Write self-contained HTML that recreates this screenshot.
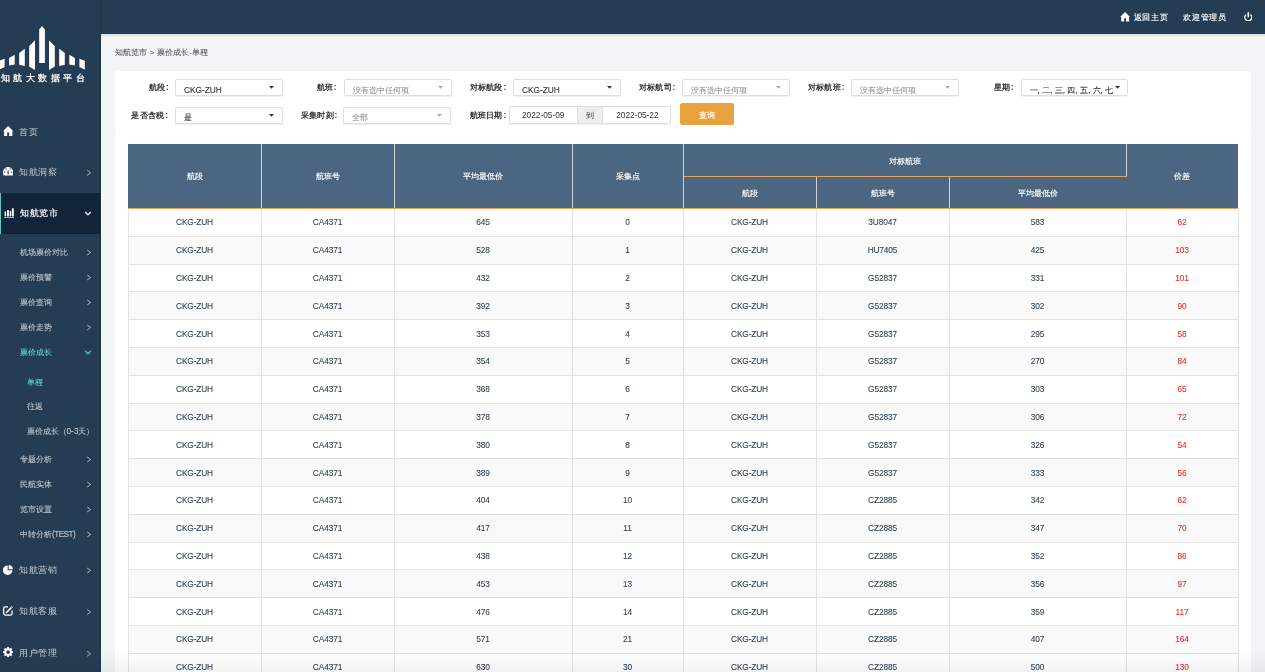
<!DOCTYPE html>
<html><head><meta charset="utf-8">
<style>
*{box-sizing:border-box;margin:0;padding:0}
html,body{width:1265px;height:672px;overflow:hidden}
body{position:relative;background:#f3f4f6;font-family:"Liberation Sans",sans-serif;color:#333}
.abs{position:absolute}
#side{position:absolute;left:0;top:0;width:101px;height:672px;background:#253d54;border-right:1px solid #1e3448}
#top{position:absolute;left:101px;top:0;width:1164px;height:34px;background:#253d54}
#topshadow{position:absolute;left:101px;top:34px;width:1164px;height:3px;background:linear-gradient(rgba(0,0,0,0.10),rgba(0,0,0,0))}
.mi{position:absolute;left:0;width:100px;color:#c3cad2;font-size:9px;letter-spacing:0.6px;line-height:12px;white-space:nowrap}
.mi .t{position:absolute;left:19px;top:0}
.mi .ic{position:absolute;left:3px;top:0}
.arr{position:absolute;left:86px;width:6px;height:6px}
.sub{position:absolute;color:#bcc4cc;font-size:8.3px;line-height:10px;white-space:nowrap;-webkit-text-stroke:0.1px currentColor}
.teal{color:#5fd3d0}
#logo-text{position:absolute;left:1px;top:72.2px;color:#fff;font-size:9.4px;letter-spacing:3.45px;-webkit-text-stroke:0.25px #fff;white-space:nowrap;line-height:12px}
.tr{position:absolute;top:11px;color:#fff;font-size:8.4px;letter-spacing:0.75px;line-height:11px;white-space:nowrap;-webkit-text-stroke:0.15px #fff}
#crumb{position:absolute;left:115px;top:46px;font-size:8px;color:#5c5c5c;line-height:11px;white-space:nowrap;letter-spacing:0.1px;-webkit-text-stroke:0.1px #5c5c5c}
.panel{position:absolute;background:#fff;border-radius:3px}
.lbl{position:absolute;font-size:8.3px;letter-spacing:0.3px;font-weight:bold;color:#333;line-height:10px;white-space:nowrap;text-align:right}
.sel{position:absolute;height:17px;width:108px;border:1px solid #dedede;box-shadow:0 0.5px 1px rgba(0,0,0,0.06);border-radius:2px;background:#fff;font-size:8.3px;color:#333;white-space:nowrap}
.sel .v{position:absolute;left:8px;top:4.6px;line-height:10px;-webkit-text-stroke:0.1px currentColor}
.sel.ph .v{color:#999}
.car{position:absolute;top:6.2px;width:5px;height:3px}

#wrap{position:absolute;left:0;top:0;width:1265px;height:672px;will-change:transform}
#tbl{position:absolute;left:128px;top:144px;border-collapse:collapse;table-layout:fixed;width:1110px;font-size:8.3px}
#tbl th{background:#4a6782;color:#fff;font-weight:normal;border:1px solid #e0e0e0;border-top:none;height:32px;text-align:center}
#tbl td{height:27.8px;text-align:center;color:#34495e;border:1px solid #e6e6e6;padding:0}
#tbl tr.s td{background:#f9f9f9}
#tbl td.r{color:#e5332a}
.hl{left:128px;width:1110px;height:1px;background:#e3e3e3}
.vl{top:209px;height:470px;width:1px;background:#e3e3e3}
.hv{width:1px;background:rgba(255,255,255,0.7)}
.cell{position:absolute;text-align:center;font-size:8.3px;letter-spacing:-0.12px;line-height:10px;color:#2c3f52;white-space:nowrap;-webkit-text-stroke:0.08px #2c3f52}
.cell.r{color:#e62a21;-webkit-text-stroke:0.08px #e62a21}
.hc{position:absolute;text-align:center;font-size:8.3px;line-height:10px;color:#fff;white-space:nowrap;-webkit-text-stroke:0.15px #fff}
.dt{position:absolute;top:110px;text-align:center;font-size:8.3px;line-height:10px;color:#333;white-space:nowrap}
#shade{position:absolute;left:0;top:652px;width:1265px;height:20px;background:linear-gradient(rgba(0,0,0,0),rgba(0,0,0,0.05))}
</style></head><body>
<div id="wrap">
<div id="side">
<svg class="abs" style="left:0;top:0" width="100" height="90" viewBox="0 0 100 90">
<g fill="#fff">
<polygon points="39.2,62.9 39.2,29.4 42,26.1 44.9,29.4 44.9,62.9"/>
<polygon points="29.2,46.2 35,40.2 35,70 29.2,66.6"/>
<polygon points="19.2,52.9 24.8,48.8 24.8,65.9 19.2,64.8"/>
<polygon points="9.1,58.1 14.7,54.7 14.7,64.4 9.1,65.5"/>
<polygon points="-0.8,60.7 4.6,58.8 4.6,67 -0.8,69.6"/>
<polygon points="49,40.2 54.8,46.2 54.8,66.6 49,70"/>
<polygon points="59.2,48.8 64.8,52.9 64.8,64.8 59.2,65.9"/>
<polygon points="69.3,54.7 74.9,58.1 74.9,65.5 69.3,64.4"/>
<polygon points="79.4,58.8 84.8,60.7 84.8,69.6 79.4,67"/>
</g></svg>
<div id="logo-text">知航大数据平台</div>

<!-- main menu -->
<div class="mi" style="top:126px;height:12px">
 <svg class="ic" width="10.4" height="10.1" viewBox="0 0 10.4 10.1" style="left:2.7px;top:-0.2px"><polygon fill="#fff" points="0,5.3 5.2,0 10.4,5.3 9.4,5.3 9.4,10.1 6.2,10.1 6.2,6.5 4.2,6.5 4.2,10.1 1.1,10.1 1.1,5.3"/></svg>
 <span class="t">首页</span>
</div>
<div class="mi" style="top:166px;height:12px">
 <svg class="ic" width="10.3" height="8.6" viewBox="0 0 10.3 8.6" style="left:2.8px;top:1.4px"><path fill="#fff" fill-rule="evenodd" d="M0.7,8.6 C0.25,7.8 0,6.7 0,5.4 C0,2.4 2.3,0 5.15,0 C8,0 10.3,2.4 10.3,5.4 C10.3,6.7 10.05,7.8 9.6,8.6 Z M2.35,2.0 a0.65,0.65 0 1,0 1.3,0 a0.65,0.65 0 1,0 -1.3,0 Z M6.65,2.0 a0.65,0.65 0 1,0 1.3,0 a0.65,0.65 0 1,0 -1.3,0 Z M1.05,5.2 a0.65,0.65 0 1,0 1.3,0 a0.65,0.65 0 1,0 -1.3,0 Z M7.95,5.2 a0.65,0.65 0 1,0 1.3,0 a0.65,0.65 0 1,0 -1.3,0 Z M4.65,3.6 L5.65,3.6 L5.9,7.2 L4.4,7.2 Z"/></svg>
 <span class="t">知航洞察</span>
</div>
<div class="abs" style="left:0;top:192.5px;width:100px;height:41.3px;background:#11243a;border-left:1px solid #5bc8c6"></div>
<div class="mi" style="top:207px;height:12px;color:#fff">
 <svg class="ic" width="10" height="10.5" viewBox="0 0 10 10.2" style="left:4px;top:0.8px"><g fill="#fff"><rect x="0.6" y="3.1" width="1.5" height="5.3" rx="0.7"/><rect x="3" y="1.9" width="1.9" height="6.5" rx="0.5"/><rect x="5.7" y="2.6" width="1.5" height="5.8" rx="0.7"/><rect x="7.9" y="0" width="1.9" height="8.4" rx="0.5"/><rect x="0" y="9.2" width="10" height="1" /></g></svg>
 <span class="t" style="left:20px;-webkit-text-stroke:0.15px #fff">知航览市</span>
</div>
<!-- arrows -->
<svg class="abs" style="left:0;top:0" width="100" height="672" viewBox="0 0 100 672">
<g fill="none" stroke="#b3bcc5" stroke-width="0.95" stroke-linecap="round" stroke-linejoin="round">
<polyline points="87.5,170.45 90.6,172.80 87.5,175.15"/>
<polyline points="87.5,250.25 90.6,252.50 87.5,254.75"/>
<polyline points="87.5,275.25 90.6,277.50 87.5,279.75"/>
<polyline points="87.5,300.25 90.6,302.50 87.5,304.75"/>
<polyline points="87.5,325.25 90.6,327.50 87.5,329.75"/>
<polyline points="87.5,457.25 90.6,459.50 87.5,461.75"/>
<polyline points="87.5,482.25 90.6,484.50 87.5,486.75"/>
<polyline points="87.5,507.25 90.6,509.50 87.5,511.75"/>
<polyline points="87.5,532.25 90.6,534.50 87.5,536.75"/>
<polyline points="87.5,568.25 90.6,570.50 87.5,572.75"/>
<polyline points="87.5,609.85 90.6,612.10 87.5,614.35"/>
<polyline points="87.5,651.45 90.6,653.70 87.5,655.95"/>
</g>
<polyline fill="none" stroke="#eef1f4" stroke-width="1.25" stroke-linecap="round" stroke-linejoin="round" points="85.5,212.3 88,214.9 90.5,212.3"/>
<polyline fill="none" stroke="#5fd3d0" stroke-width="1.2" stroke-linecap="round" stroke-linejoin="round" points="85.5,351.2 88,353.8 90.5,351.2"/>
</svg>

<div class="sub" style="left:20px;top:247px">机场票价对比</div>
<div class="sub" style="left:20px;top:272.2px">票价预警</div>
<div class="sub" style="left:20px;top:297.1px">票价查询</div>
<div class="sub" style="left:20px;top:322px">票价走势</div>
<div class="sub teal" style="left:20px;top:347.1px">票价成长</div>
<div class="sub teal" style="left:26.5px;top:376.5px">单程</div>
<div class="sub" style="left:26.5px;top:401.3px">往返</div>
<div class="sub" style="left:26.5px;top:425.9px">票价成长（0-3天）</div>
<div class="sub" style="left:20px;top:454.2px">专题分析</div>
<div class="sub" style="left:20px;top:478.7px">民航实体</div>
<div class="sub" style="left:20px;top:504px">览市设置</div>
<div class="sub" style="left:20px;top:529px">中转分析<span style="letter-spacing:-0.6px">(TEST)</span></div>

<div class="mi" style="top:564px;height:12px">
 <svg class="ic" width="10" height="10" viewBox="0 0 10 10" style="left:2.8px;top:0.6px"><g fill="#fff"><path d="M4.7,0.45 A4.75,4.75 0 1,0 9.45,5.2 L4.7,5.2 Z"/><path d="M5.6,0 L5.6,4.3 L9.9,4.3 A4.3,4.3 0 0,0 5.6,0 Z"/></g></svg>
 <span class="t">知航营销</span>
</div>
<div class="mi" style="top:605px;height:12px">
 <svg class="ic" width="10" height="10" viewBox="0 0 10 10" style="left:3px;top:1px"><path fill="none" stroke="#fff" stroke-width="1.25" d="M5,0.9 L2.2,0.9 Q0.7,0.9 0.7,2.4 L0.7,7.6 Q0.7,9.1 2.2,9.1 L7.6,9.1 Q9.1,9.1 9.1,7.6 L9.1,4.6"/><path fill="#fff" d="M8.4,0.3 Q8.8,0 9.2,0.4 L9.5,0.7 Q9.9,1.1 9.6,1.5 L9.2,1.9 L8.0,0.7 Z M7.6,1.1 L8.8,2.3 L4.0,7.0 L2.6,7.4 L3.0,6.0 Z"/></svg>
 <span class="t">知航客服</span>
</div>
<div class="mi" style="top:647px;height:12px">
 <svg class="ic" width="10.2" height="10.2" viewBox="-5.1 -5.1 10.2 10.2" style="left:2.8px;top:0.1px"><g fill="#fff"><rect x="-0.95" y="-5.05" width="1.9" height="2.4" transform="rotate(0)"/><rect x="-0.95" y="-5.05" width="1.9" height="2.4" transform="rotate(45)"/><rect x="-0.95" y="-5.05" width="1.9" height="2.4" transform="rotate(90)"/><rect x="-0.95" y="-5.05" width="1.9" height="2.4" transform="rotate(135)"/><rect x="-0.95" y="-5.05" width="1.9" height="2.4" transform="rotate(180)"/><rect x="-0.95" y="-5.05" width="1.9" height="2.4" transform="rotate(225)"/><rect x="-0.95" y="-5.05" width="1.9" height="2.4" transform="rotate(270)"/><rect x="-0.95" y="-5.05" width="1.9" height="2.4" transform="rotate(315)"/><circle r="3.75"/></g><circle r="1.85" fill="#253d54"/></svg>
 <span class="t">用户管理</span>
</div>
</div>

<div id="top">
</div>
<div id="topshadow"></div>
<svg class="abs" style="left:1119.6px;top:12.2px" width="10.2" height="9.6" viewBox="0 0 10.4 10.1"><polygon fill="#fff" points="0,5.3 5.2,0 10.4,5.3 9.4,5.3 9.4,10.1 6.2,10.1 6.2,6.5 4.2,6.5 4.2,10.1 1.1,10.1 1.1,5.3"/></svg>
<div class="tr" style="left:1133.5px;top:12px">返回主页</div>
<div class="tr" style="left:1183px;top:12px">欢迎管理员</div>
<svg class="abs" style="left:1243.8px;top:11.8px" width="8.6" height="9.4" viewBox="0 0 8.6 9.4"><g fill="none" stroke="#fff" stroke-linecap="round"><path stroke-width="1.3" d="M1.86,2.86 A3.45,3.45 0 1,0 6.74,2.86"/><line stroke-width="1.6" x1="4.3" y1="0.8" x2="4.3" y2="4.5"/></g></svg>

<div id="crumb" style="top:46.8px">知航览市 &gt; 票价成长-单程</div>
<div class="panel" style="left:115px;top:71px;width:1136px;height:59.5px"></div>
<div class="panel" style="left:115px;top:130.5px;width:1136px;height:560px"></div>
<div class="abs" style="left:128px;top:625px;width:1110px;height:28px;background:#f9f9f9"></div>
<div class="abs" style="left:128px;top:569px;width:1110px;height:28px;background:#f9f9f9"></div>
<div class="abs" style="left:128px;top:514px;width:1110px;height:28px;background:#f9f9f9"></div>
<div class="abs" style="left:128px;top:458px;width:1110px;height:28px;background:#f9f9f9"></div>
<div class="abs" style="left:128px;top:403px;width:1110px;height:27px;background:#f9f9f9"></div>
<div class="abs" style="left:128px;top:347px;width:1110px;height:28px;background:#f9f9f9"></div>
<div class="abs" style="left:128px;top:291px;width:1110px;height:28px;background:#f9f9f9"></div>
<div class="abs" style="left:128px;top:236px;width:1110px;height:28px;background:#f9f9f9"></div>
<div class="cell" style="left:128px;width:133px;top:217.30px">CKG-ZUH</div>
<div class="cell" style="left:261px;width:133px;top:217.30px">CA4371</div>
<div class="cell" style="left:394px;width:178px;top:217.30px">645</div>
<div class="cell" style="left:572px;width:111px;top:217.30px">0</div>
<div class="cell" style="left:683px;width:133px;top:217.30px">CKG-ZUH</div>
<div class="cell" style="left:816px;width:133px;top:217.30px">3U8047</div>
<div class="cell" style="left:949px;width:177px;top:217.30px">583</div>
<div class="cell r" style="left:1126px;width:112px;top:217.30px">62</div>
<div class="cell" style="left:128px;width:133px;top:245.10px">CKG-ZUH</div>
<div class="cell" style="left:261px;width:133px;top:245.10px">CA4371</div>
<div class="cell" style="left:394px;width:178px;top:245.10px">528</div>
<div class="cell" style="left:572px;width:111px;top:245.10px">1</div>
<div class="cell" style="left:683px;width:133px;top:245.10px">CKG-ZUH</div>
<div class="cell" style="left:816px;width:133px;top:245.10px">HU7405</div>
<div class="cell" style="left:949px;width:177px;top:245.10px">425</div>
<div class="cell r" style="left:1126px;width:112px;top:245.10px">103</div>
<div class="cell" style="left:128px;width:133px;top:272.90px">CKG-ZUH</div>
<div class="cell" style="left:261px;width:133px;top:272.90px">CA4371</div>
<div class="cell" style="left:394px;width:178px;top:272.90px">432</div>
<div class="cell" style="left:572px;width:111px;top:272.90px">2</div>
<div class="cell" style="left:683px;width:133px;top:272.90px">CKG-ZUH</div>
<div class="cell" style="left:816px;width:133px;top:272.90px">G52837</div>
<div class="cell" style="left:949px;width:177px;top:272.90px">331</div>
<div class="cell r" style="left:1126px;width:112px;top:272.90px">101</div>
<div class="cell" style="left:128px;width:133px;top:300.70px">CKG-ZUH</div>
<div class="cell" style="left:261px;width:133px;top:300.70px">CA4371</div>
<div class="cell" style="left:394px;width:178px;top:300.70px">392</div>
<div class="cell" style="left:572px;width:111px;top:300.70px">3</div>
<div class="cell" style="left:683px;width:133px;top:300.70px">CKG-ZUH</div>
<div class="cell" style="left:816px;width:133px;top:300.70px">G52837</div>
<div class="cell" style="left:949px;width:177px;top:300.70px">302</div>
<div class="cell r" style="left:1126px;width:112px;top:300.70px">90</div>
<div class="cell" style="left:128px;width:133px;top:328.50px">CKG-ZUH</div>
<div class="cell" style="left:261px;width:133px;top:328.50px">CA4371</div>
<div class="cell" style="left:394px;width:178px;top:328.50px">353</div>
<div class="cell" style="left:572px;width:111px;top:328.50px">4</div>
<div class="cell" style="left:683px;width:133px;top:328.50px">CKG-ZUH</div>
<div class="cell" style="left:816px;width:133px;top:328.50px">G52837</div>
<div class="cell" style="left:949px;width:177px;top:328.50px">295</div>
<div class="cell r" style="left:1126px;width:112px;top:328.50px">58</div>
<div class="cell" style="left:128px;width:133px;top:356.30px">CKG-ZUH</div>
<div class="cell" style="left:261px;width:133px;top:356.30px">CA4371</div>
<div class="cell" style="left:394px;width:178px;top:356.30px">354</div>
<div class="cell" style="left:572px;width:111px;top:356.30px">5</div>
<div class="cell" style="left:683px;width:133px;top:356.30px">CKG-ZUH</div>
<div class="cell" style="left:816px;width:133px;top:356.30px">G52837</div>
<div class="cell" style="left:949px;width:177px;top:356.30px">270</div>
<div class="cell r" style="left:1126px;width:112px;top:356.30px">84</div>
<div class="cell" style="left:128px;width:133px;top:384.10px">CKG-ZUH</div>
<div class="cell" style="left:261px;width:133px;top:384.10px">CA4371</div>
<div class="cell" style="left:394px;width:178px;top:384.10px">368</div>
<div class="cell" style="left:572px;width:111px;top:384.10px">6</div>
<div class="cell" style="left:683px;width:133px;top:384.10px">CKG-ZUH</div>
<div class="cell" style="left:816px;width:133px;top:384.10px">G52837</div>
<div class="cell" style="left:949px;width:177px;top:384.10px">303</div>
<div class="cell r" style="left:1126px;width:112px;top:384.10px">65</div>
<div class="cell" style="left:128px;width:133px;top:411.90px">CKG-ZUH</div>
<div class="cell" style="left:261px;width:133px;top:411.90px">CA4371</div>
<div class="cell" style="left:394px;width:178px;top:411.90px">378</div>
<div class="cell" style="left:572px;width:111px;top:411.90px">7</div>
<div class="cell" style="left:683px;width:133px;top:411.90px">CKG-ZUH</div>
<div class="cell" style="left:816px;width:133px;top:411.90px">G52837</div>
<div class="cell" style="left:949px;width:177px;top:411.90px">306</div>
<div class="cell r" style="left:1126px;width:112px;top:411.90px">72</div>
<div class="cell" style="left:128px;width:133px;top:439.70px">CKG-ZUH</div>
<div class="cell" style="left:261px;width:133px;top:439.70px">CA4371</div>
<div class="cell" style="left:394px;width:178px;top:439.70px">380</div>
<div class="cell" style="left:572px;width:111px;top:439.70px">8</div>
<div class="cell" style="left:683px;width:133px;top:439.70px">CKG-ZUH</div>
<div class="cell" style="left:816px;width:133px;top:439.70px">G52837</div>
<div class="cell" style="left:949px;width:177px;top:439.70px">326</div>
<div class="cell r" style="left:1126px;width:112px;top:439.70px">54</div>
<div class="cell" style="left:128px;width:133px;top:467.50px">CKG-ZUH</div>
<div class="cell" style="left:261px;width:133px;top:467.50px">CA4371</div>
<div class="cell" style="left:394px;width:178px;top:467.50px">389</div>
<div class="cell" style="left:572px;width:111px;top:467.50px">9</div>
<div class="cell" style="left:683px;width:133px;top:467.50px">CKG-ZUH</div>
<div class="cell" style="left:816px;width:133px;top:467.50px">G52837</div>
<div class="cell" style="left:949px;width:177px;top:467.50px">333</div>
<div class="cell r" style="left:1126px;width:112px;top:467.50px">56</div>
<div class="cell" style="left:128px;width:133px;top:495.30px">CKG-ZUH</div>
<div class="cell" style="left:261px;width:133px;top:495.30px">CA4371</div>
<div class="cell" style="left:394px;width:178px;top:495.30px">404</div>
<div class="cell" style="left:572px;width:111px;top:495.30px">10</div>
<div class="cell" style="left:683px;width:133px;top:495.30px">CKG-ZUH</div>
<div class="cell" style="left:816px;width:133px;top:495.30px">CZ2885</div>
<div class="cell" style="left:949px;width:177px;top:495.30px">342</div>
<div class="cell r" style="left:1126px;width:112px;top:495.30px">62</div>
<div class="cell" style="left:128px;width:133px;top:523.10px">CKG-ZUH</div>
<div class="cell" style="left:261px;width:133px;top:523.10px">CA4371</div>
<div class="cell" style="left:394px;width:178px;top:523.10px">417</div>
<div class="cell" style="left:572px;width:111px;top:523.10px">11</div>
<div class="cell" style="left:683px;width:133px;top:523.10px">CKG-ZUH</div>
<div class="cell" style="left:816px;width:133px;top:523.10px">CZ2885</div>
<div class="cell" style="left:949px;width:177px;top:523.10px">347</div>
<div class="cell r" style="left:1126px;width:112px;top:523.10px">70</div>
<div class="cell" style="left:128px;width:133px;top:550.90px">CKG-ZUH</div>
<div class="cell" style="left:261px;width:133px;top:550.90px">CA4371</div>
<div class="cell" style="left:394px;width:178px;top:550.90px">438</div>
<div class="cell" style="left:572px;width:111px;top:550.90px">12</div>
<div class="cell" style="left:683px;width:133px;top:550.90px">CKG-ZUH</div>
<div class="cell" style="left:816px;width:133px;top:550.90px">CZ2885</div>
<div class="cell" style="left:949px;width:177px;top:550.90px">352</div>
<div class="cell r" style="left:1126px;width:112px;top:550.90px">86</div>
<div class="cell" style="left:128px;width:133px;top:578.70px">CKG-ZUH</div>
<div class="cell" style="left:261px;width:133px;top:578.70px">CA4371</div>
<div class="cell" style="left:394px;width:178px;top:578.70px">453</div>
<div class="cell" style="left:572px;width:111px;top:578.70px">13</div>
<div class="cell" style="left:683px;width:133px;top:578.70px">CKG-ZUH</div>
<div class="cell" style="left:816px;width:133px;top:578.70px">CZ2885</div>
<div class="cell" style="left:949px;width:177px;top:578.70px">356</div>
<div class="cell r" style="left:1126px;width:112px;top:578.70px">97</div>
<div class="cell" style="left:128px;width:133px;top:606.50px">CKG-ZUH</div>
<div class="cell" style="left:261px;width:133px;top:606.50px">CA4371</div>
<div class="cell" style="left:394px;width:178px;top:606.50px">476</div>
<div class="cell" style="left:572px;width:111px;top:606.50px">14</div>
<div class="cell" style="left:683px;width:133px;top:606.50px">CKG-ZUH</div>
<div class="cell" style="left:816px;width:133px;top:606.50px">CZ2885</div>
<div class="cell" style="left:949px;width:177px;top:606.50px">359</div>
<div class="cell r" style="left:1126px;width:112px;top:606.50px">117</div>
<div class="cell" style="left:128px;width:133px;top:634.30px">CKG-ZUH</div>
<div class="cell" style="left:261px;width:133px;top:634.30px">CA4371</div>
<div class="cell" style="left:394px;width:178px;top:634.30px">571</div>
<div class="cell" style="left:572px;width:111px;top:634.30px">21</div>
<div class="cell" style="left:683px;width:133px;top:634.30px">CKG-ZUH</div>
<div class="cell" style="left:816px;width:133px;top:634.30px">CZ2885</div>
<div class="cell" style="left:949px;width:177px;top:634.30px">407</div>
<div class="cell r" style="left:1126px;width:112px;top:634.30px">164</div>
<div class="cell" style="left:128px;width:133px;top:662.10px">CKG-ZUH</div>
<div class="cell" style="left:261px;width:133px;top:662.10px">CA4371</div>
<div class="cell" style="left:394px;width:178px;top:662.10px">630</div>
<div class="cell" style="left:572px;width:111px;top:662.10px">30</div>
<div class="cell" style="left:683px;width:133px;top:662.10px">CKG-ZUH</div>
<div class="cell" style="left:816px;width:133px;top:662.10px">CZ2885</div>
<div class="cell" style="left:949px;width:177px;top:662.10px">500</div>
<div class="cell r" style="left:1126px;width:112px;top:662.10px">130</div>
<div class="abs hl" style="top:236px"></div>
<div class="abs hl" style="top:264px"></div>
<div class="abs hl" style="top:291px"></div>
<div class="abs hl" style="top:319px"></div>
<div class="abs hl" style="top:347px"></div>
<div class="abs hl" style="top:375px"></div>
<div class="abs hl" style="top:403px"></div>
<div class="abs hl" style="top:430px"></div>
<div class="abs hl" style="top:458px"></div>
<div class="abs hl" style="top:486px"></div>
<div class="abs hl" style="top:514px"></div>
<div class="abs hl" style="top:542px"></div>
<div class="abs hl" style="top:569px"></div>
<div class="abs hl" style="top:597px"></div>
<div class="abs hl" style="top:625px"></div>
<div class="abs hl" style="top:653px"></div>
<div class="abs hl" style="top:681px"></div>
<div class="abs vl" style="left:128px"></div>
<div class="abs vl" style="left:261px"></div>
<div class="abs vl" style="left:394px"></div>
<div class="abs vl" style="left:572px"></div>
<div class="abs vl" style="left:683px"></div>
<div class="abs vl" style="left:816px"></div>
<div class="abs vl" style="left:949px"></div>
<div class="abs vl" style="left:1126px"></div>
<div class="abs vl" style="left:1238px"></div>
<div class="abs" style="left:128px;top:144px;width:1110px;height:64px;background:#4a6680"></div>
<div class="abs" style="left:128px;top:207.5px;width:1110px;height:1.5px;background:#e79f5b"></div>
<div class="abs" style="left:683px;top:176px;width:444px;height:1px;background:#e79f5b"></div>
<div class="abs hv" style="left:261px;top:144px;height:64px"></div>
<div class="abs hv" style="left:394px;top:144px;height:64px"></div>
<div class="abs hv" style="left:572px;top:144px;height:64px"></div>
<div class="abs hv" style="left:683px;top:144px;height:64px"></div>
<div class="abs hv" style="left:1126px;top:144px;height:32px"></div>
<div class="abs hv" style="left:816px;top:177px;height:31px"></div>
<div class="abs hv" style="left:949px;top:177px;height:31px"></div>
<div class="hc" style="left:128px;width:133px;top:171.00px">航段</div>
<div class="hc" style="left:261px;width:133px;top:171.00px">航班号</div>
<div class="hc" style="left:394px;width:178px;top:171.00px">平均最低价</div>
<div class="hc" style="left:572px;width:111px;top:171.00px">采集点</div>
<div class="hc" style="left:683px;width:443px;top:155.50px">对标航班</div>
<div class="hc" style="left:683px;width:133px;top:187.50px">航段</div>
<div class="hc" style="left:816px;width:133px;top:187.50px">航班号</div>
<div class="hc" style="left:949px;width:177px;top:187.50px">平均最低价</div>
<div class="hc" style="left:1126px;width:112px;top:171.00px">价差</div><div class="lbl" style="left:148.8px;top:82px">航段<span style="margin-left:0.6px">:</span></div>
<div class="sel" style="left:175px;top:79px"><span class="v">CKG-ZUH</span><svg class="car" style="left:93.1px" viewBox="0 0 5 3"><polygon points="0,0 5,0 2.5,2.7" fill="#333"/></svg></div>
<div class="lbl" style="left:316.6px;top:82px">航班<span style="margin-left:0.6px">:</span></div>
<div class="sel ph" style="left:344px;top:79px"><span class="v">没有选中任何项</span><svg class="car" style="left:93.1px" viewBox="0 0 5 3"><polygon points="0,0 5,0 2.5,2.7" fill="#a9a9a9"/></svg></div>
<div class="lbl" style="left:469.6px;top:82px">对标航段<span style="margin-left:0.6px">:</span></div>
<div class="sel" style="left:513px;top:79px"><span class="v">CKG-ZUH</span><svg class="car" style="left:93.1px" viewBox="0 0 5 3"><polygon points="0,0 5,0 2.5,2.7" fill="#333"/></svg></div>
<div class="lbl" style="left:638.8px;top:82px">对标航司<span style="margin-left:0.6px">:</span></div>
<div class="sel ph" style="left:682.3px;top:79px"><span class="v">没有选中任何项</span><svg class="car" style="left:93.1px" viewBox="0 0 5 3"><polygon points="0,0 5,0 2.5,2.7" fill="#a9a9a9"/></svg></div>
<div class="lbl" style="left:807.9px;top:82px">对标航班<span style="margin-left:0.6px">:</span></div>
<div class="sel ph" style="left:851.2px;top:79px"><span class="v">没有选中任何项</span><svg class="car" style="left:93.1px" viewBox="0 0 5 3"><polygon points="0,0 5,0 2.5,2.7" fill="#a9a9a9"/></svg></div>
<div class="lbl" style="left:993.5px;top:82px">星期<span style="margin-left:0.6px">:</span></div>
<div class="sel" style="left:1020.5px;top:79px;width:107.5px"><span class="v">一, 二, 三, 四, 五, 六, 七</span><svg class="car" style="left:93.6px" viewBox="0 0 5 3"><polygon points="0,0 5,0 2.5,2.7" fill="#333"/></svg></div>

<div class="lbl" style="left:131.4px;top:110px">是否含税<span style="margin-left:0.6px">:</span></div>
<div class="sel" style="left:174.5px;top:106.8px"><span class="v">是</span><svg class="car" style="left:93.1px" viewBox="0 0 5 3"><polygon points="0,0 5,0 2.5,2.7" fill="#333"/></svg></div>
<div class="lbl" style="left:300.7px;top:110px">采集时刻<span style="margin-left:0.6px">:</span></div>
<div class="sel ph" style="left:343.3px;top:106.8px"><span class="v">全部</span><svg class="car" style="left:93.1px" viewBox="0 0 5 3"><polygon points="0,0 5,0 2.5,2.7" fill="#a9a9a9"/></svg></div>
<div class="lbl" style="left:469.6px;top:110px">航班日期<span style="margin-left:0.6px">:</span></div>
<div class="abs" style="left:509px;top:106.4px;width:162.4px;height:17.4px;border:1px solid #dedede;border-radius:2px;background:#fff;box-shadow:0 0.5px 1px rgba(0,0,0,0.06)"></div>
<div class="abs" style="left:577.4px;top:107.4px;width:26px;height:15.4px;background:#eee;border-left:1px solid #dedede;border-right:1px solid #dedede"></div>
<div class="dt" style="left:509px;width:68.4px">2022-05-09</div>
<div class="dt" style="left:577.4px;width:26px">到</div>
<div class="dt" style="left:603.4px;width:68px">2022-05-22</div>
<div class="abs" style="left:680px;top:103px;width:54.2px;height:21.6px;background:#e8a23e;border-radius:2.5px"></div>
<div class="dt" style="left:680px;width:54.2px;top:109.5px;color:#fff;-webkit-text-stroke:0.15px #fff">查询</div>
<div id="shade"></div></div></body></html>
